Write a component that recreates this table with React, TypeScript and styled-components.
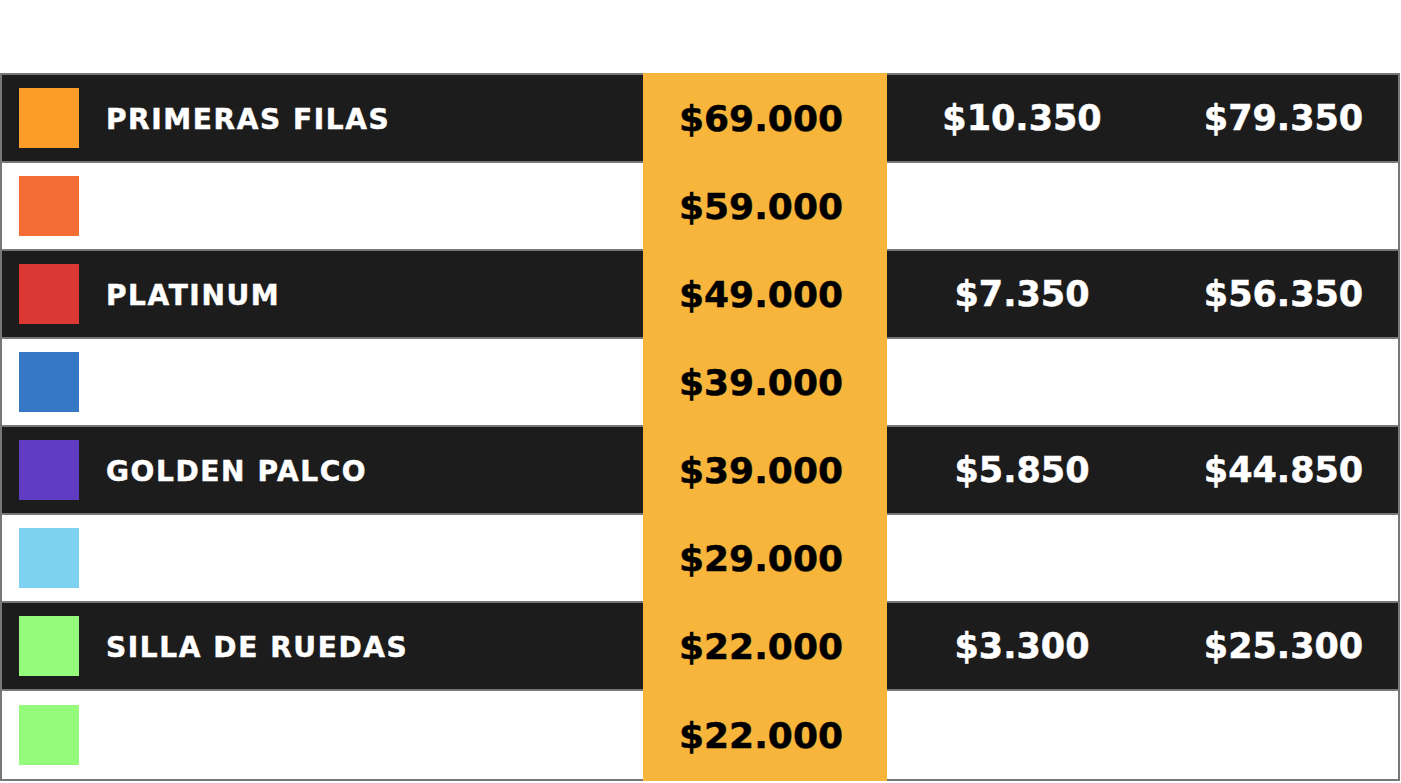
import React from "react";
import styled, { createGlobalStyle } from "styled-components";

const Global = createGlobalStyle`
  html, body { margin: 0; padding: 0; background: #ffffff; }
  body { font-family: "DejaVu Sans", "Noto Sans", sans-serif; }
`;

const Page = styled.div`
  padding-top: 73px;
  width: 1401px;
`;

const Table = styled.div`
  width: 1400px;
  box-sizing: border-box;
  border: 2px solid #777777;
  border-bottom-width: 0;
  display: flex;
  flex-direction: column;
`;

const Row = styled.div<{ $dark: boolean; $last?: boolean }>`
  display: grid;
  grid-template-columns: 641px 244px 270px 1fr;
  height: ${(p) => (p.$last ? 90 : 88)}px;
  box-sizing: border-box;
  border-bottom: 2px solid #777777;
  background: ${(p) => (p.$dark ? "#1c1c1c" : "#ffffff")};
  color: ${(p) => (p.$dark ? "#ffffff" : "#000000")};
`;

const NameCell = styled.div`
  display: flex;
  align-items: center;
  gap: 27px;
  padding-left: 17px;
`;

const Swatch = styled.div<{ $color: string }>`
  width: 60px;
  height: 60px;
  background: ${(p) => p.$color};
  flex: none;
`;

const Name = styled.span`
  font-family: "DejaVu Sans", "Noto Sans", sans-serif;
  font-weight: 700;
  font-size: 28px;
  letter-spacing: 1.6px;
  text-transform: uppercase;
  color: #ffffff;
  -webkit-text-stroke: 0.5px #ffffff;
  margin-top: 2px;
`;

const Amount = styled.div`
  display: flex;
  align-items: center;
  justify-content: center;
  font-family: "DejaVu Sans", "Noto Sans", sans-serif;
  font-weight: 700;
  font-size: 36px;
  letter-spacing: 0px;
`;

const PriceCell = styled(Amount)`
  background: #f7b53c;
  color: #000000;
  -webkit-text-stroke: 0.5px #000000;
  margin-top: -2px;
  margin-bottom: -2px;
  padding-right: 8px;
`;

const ValueCell = styled(Amount)<{ $shift?: number }>`
  color: #ffffff;
  font-size: 35px;
  -webkit-text-stroke: 0.5px #ffffff;
  padding-left: ${(p) => p.$shift ?? 0}px;
`;

type Item = {
  color: string;
  name?: string;
  price: string;
  fee?: string;
  total?: string;
};

const items: Item[] = [
  { color: "#fd9d29", name: "Primeras Filas", price: "$69.000", fee: "$10.350", total: "$79.350" },
  { color: "#f46d35", price: "$59.000" },
  { color: "#db3833", name: "Platinum", price: "$49.000", fee: "$7.350", total: "$56.350" },
  { color: "#3678c6", price: "$39.000" },
  { color: "#5f3cc1", name: "Golden Palco", price: "$39.000", fee: "$5.850", total: "$44.850" },
  { color: "#7dd2f2", price: "$29.000" },
  { color: "#95fc7b", name: "Silla de Ruedas", price: "$22.000", fee: "$3.300", total: "$25.300" },
  { color: "#95fc7b", price: "$22.000" },
];

export default function App() {
  return (
    <>
      <Global />
      <Page>
        <Table>
          {items.map((it, i) => {
            const dark = i % 2 === 0;
            return (
              <Row key={i} $dark={dark} $last={i === items.length - 1}>
                <NameCell>
                  <Swatch $color={it.color} />
                  {it.name && <Name>{it.name}</Name>}
                </NameCell>
                <PriceCell>{it.price}</PriceCell>
                <ValueCell>{it.fee ?? ""}</ValueCell>
                <ValueCell $shift={12}>{it.total ?? ""}</ValueCell>
              </Row>
            );
          })}
        </Table>
      </Page>
    </>
  );
}
